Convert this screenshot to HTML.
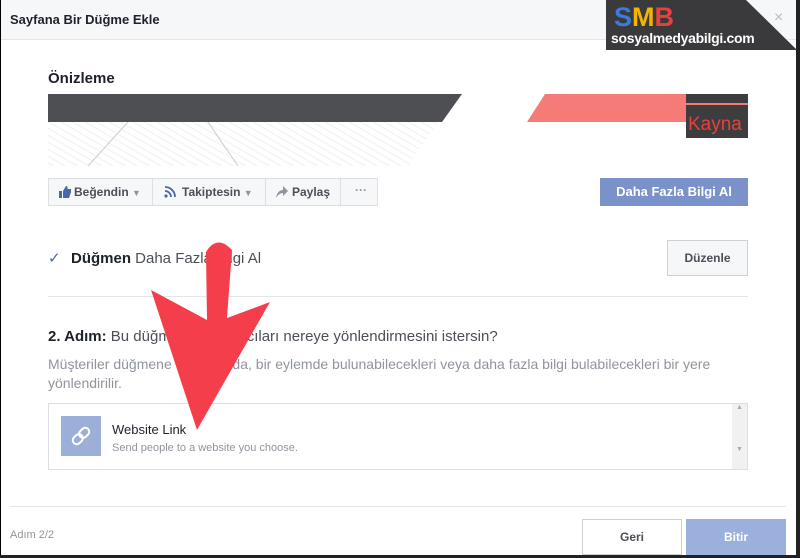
<!DOCTYPE html>
<html><head><meta charset="utf-8"><style>
*{margin:0;padding:0;box-sizing:border-box}
body{width:800px;height:558px;overflow:hidden;background:#fff;font-family:"Liberation Sans",sans-serif;position:relative;color:#1d2129}
.abs{position:absolute}
.hdr{left:0;top:0;width:800px;height:40px;background:#f6f7f9;border-bottom:1px solid #e5e5e5}
.btn{position:absolute;border:1px solid #ced0d4;background:#f6f7f9;font-size:12px;font-weight:bold;color:#4b4f56;text-align:center}
</style></head><body>
<div class="abs hdr"></div>
<div class="abs" style="left:10px;top:12px;font-size:13px;font-weight:bold;color:#1d2129">Sayfana Bir Düğme Ekle</div>
<div class="abs" style="left:0;top:0;width:1px;height:558px;background:#000"></div>
<div class="abs" style="left:796px;top:0;width:4px;height:558px;background:#222"></div>
<div class="abs" style="left:0;top:555px;width:800px;height:3px;background:#222"></div>
<div class="abs" style="left:774px;top:9px;font-size:16px;color:#bbb">×</div>
<!-- logo -->
<svg class="abs" style="left:606px;top:0" width="194" height="52"><polygon points="0,0 140,0 191,50 0,50" fill="#3a3a3c"/></svg>
<div class="abs" style="left:614px;top:2px;font-size:27px;font-weight:bold;letter-spacing:0px"><span style="color:#3b7be0">S</span><span style="color:#f2b400">M</span><span style="color:#e8413b">B</span></div>
<div class="abs" style="left:611px;top:30px;font-size:14px;font-weight:bold;color:#fff;letter-spacing:-0.3px">sosyalmedyabilgi.com</div>
<div class="abs" style="left:48px;top:70px;font-size:15px;font-weight:bold;color:#1d2129">Önizleme</div>
<!-- cover -->
<svg class="abs" style="left:48px;top:94px" width="700" height="72">
<defs><pattern id="p" width="6" height="6" patternUnits="userSpaceOnUse" patternTransform="rotate(-60)"><line x1="0" y1="0" x2="0" y2="6" stroke="#e2e2e2" stroke-width="1"/></pattern></defs>
<polygon points="0,28 390,28 360,72 0,72" fill="url(#p)"/>
<line x1="80" y1="28" x2="40" y2="72" stroke="#ccc"/><line x1="160" y1="28" x2="190" y2="72" stroke="#ccc"/>
<polygon points="0,0 414,0 394,28 0,28" fill="#4e4f53"/>
<polygon points="497,0 700,0 700,28 479,28" fill="#f47b76"/>
<rect x="638" y="0" width="62" height="44" fill="#3d3d3f"/>
<rect x="638" y="9" width="62" height="2" fill="#f47b76"/>
<text x="640" y="36" font-size="19" fill="#e8413b" font-family="Liberation Sans">Kayna</text>
</svg>
<!-- action bar -->
<div class="abs" style="left:48px;top:178px;width:330px;height:28px;border:1px solid #dddfe2;background:#f6f7f9;font-size:12px;font-weight:bold;color:#4b4f56">
<svg class="abs" style="left:10px;top:7px" width="12" height="12"><path d="M0 5h3v7H0zM4 5l3-5c1 0 2 1 1.5 3H12v3l-2 6H4z" fill="#4b67a8"/></svg>
<span class="abs" style="left:25px;top:6px">Beğendin <span style="font-size:9px;color:#90949c">▼</span></span>
<span class="abs" style="left:103px;top:-1px;width:1px;height:28px;background:#dddfe2"></span>
<svg class="abs" style="left:115px;top:7px" width="12" height="12"><circle cx="2" cy="10" r="1.6" fill="#4b67a8"/><path d="M1 5a6 6 0 0 1 6 6M1 1a10 10 0 0 1 10 10" stroke="#4b67a8" stroke-width="1.8" fill="none"/></svg>
<span class="abs" style="left:133px;top:6px">Takiptesin <span style="font-size:9px;color:#90949c">▼</span></span>
<span class="abs" style="left:216px;top:-1px;width:1px;height:28px;background:#dddfe2"></span>
<svg class="abs" style="left:227px;top:7px" width="12" height="12"><path d="M0 12C1 6 4 4 7 4V0l5 5-5 5V7C4 7 2 9 0 12z" fill="#90949c"/></svg>
<span class="abs" style="left:243px;top:6px">Paylaş</span>
<span class="abs" style="left:291px;top:-1px;width:1px;height:28px;background:#dddfe2"></span>
<span class="abs" style="left:306px;top:4px;color:#90949c">···</span>
</div>
<div class="abs" style="left:600px;top:178px;width:148px;height:28px;background:#7b91c9;color:#fff;font-size:13px;font-weight:bold;text-align:center;line-height:28px">Daha Fazla Bilgi Al</div>
<div class="abs" style="left:48px;top:249px;font-size:15px;color:#4b67a8">✓</div>
<div class="abs" style="left:71px;top:250px;font-size:15px;color:#4b4f56"><b style="color:#1d2129">Düğmen</b> Daha Fazla Bilgi Al</div>
<div class="btn" style="left:667px;top:240px;width:81px;height:36px;line-height:34px">Düzenle</div>
<div class="abs" style="left:48px;top:296px;width:700px;height:1px;background:#e5e5e5"></div>
<div class="abs" style="left:48px;top:328px;font-size:15px;color:#4b4f56"><b style="color:#1d2129">2. Adım:</b> Bu düğmenin kullanıcıları nereye yönlendirmesini istersin?</div>
<div class="abs" style="left:48px;top:355px;width:680px;font-size:14px;line-height:19px;color:#90949c">Müşteriler düğmene tıkladığında, bir eylemde bulunabilecekleri veya daha fazla bilgi bulabilecekleri bir yere yönlendirilir.</div>
<div class="abs" style="left:48px;top:403px;width:700px;height:67px;border:1px solid #dddfe2"></div>
<div class="abs" style="left:732px;top:404px;width:15px;height:65px;background:#f1f1f1;font-size:7px;color:#aaa;text-align:center">▲<br><br><br><br><br><br>▼</div>
<div class="abs" style="left:61px;top:416px;width:40px;height:40px;background:#9cafd8"></div>
<svg class="abs" style="left:61px;top:416px" width="40" height="40"><g stroke="#fff" stroke-width="2" fill="none" transform="rotate(-45 20 20)"><rect x="10" y="16" width="11" height="8" rx="4"/><rect x="19" y="16" width="11" height="8" rx="4"/></g></svg>
<div class="abs" style="left:112px;top:422px;font-size:13px;color:#1d2129">Website Link</div>
<div class="abs" style="left:112px;top:442px;font-size:11px;color:#90949c">Send people to a website you choose.</div>
<div class="abs" style="left:10px;top:506px;width:776px;height:1px;background:#e5e5e5"></div>
<div class="abs" style="left:10px;top:529px;font-size:11px;color:#90949c">Adım 2/2</div>
<div class="btn" style="left:582px;top:519px;width:100px;height:36px;line-height:34px;background:#fff">Geri</div>
<div class="abs" style="left:686px;top:519px;width:100px;height:36px;line-height:36px;background:#9cb0de;color:#fff;font-size:12px;font-weight:bold;text-align:center">Bitir</div>
<!-- arrow -->
<svg class="abs" style="left:0;top:0" width="800" height="558"><path d="M206 252 Q217 234 232 250 L227 318 L270 302 L197 430 L151 290 L207 320 Z" fill="#f43e4c"/></svg>
</body></html>
